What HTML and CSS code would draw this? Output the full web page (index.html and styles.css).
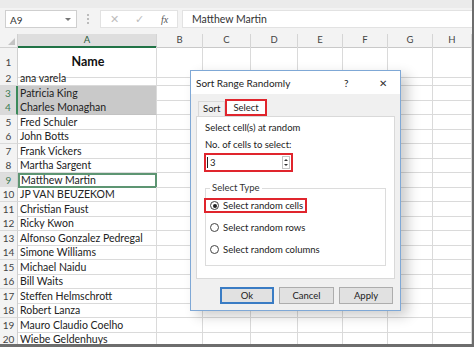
FILE: index.html
```html
<!DOCTYPE html>
<html lang="en">
<head>
  <meta charset="UTF-8">
  <title>Sort Range Randomly</title>
  <link rel="stylesheet" href="styles.css">
</head>
<body>
<div class="app">

  <!-- formula bar -->
  <div class="formula-bar">
    <div class="namebox">A9<span class="caret"></span></div>
    <div class="grip"></div>
    <div class="fx-box"><span class="fx-x">✕</span><span class="fx-ok">✓</span><span class="fx">fx</span></div>
    <div class="formula-input">Matthew Martin</div>
  </div>

  <!-- sheet -->
  <div class="sheet">
    <div class="row head">
      <div class="corner"><span></span></div>
      <div class="ch sel">A</div><div class="ch">B</div><div class="ch">C</div><div class="ch">D</div>
      <div class="ch">E</div><div class="ch">F</div><div class="ch">G</div><div class="ch">H</div>
    </div>
    <div class="row first">
      <div class="rh">1</div><div class="c a title">Name</div>
      <div class="c"></div><div class="c"></div><div class="c"></div><div class="c"></div><div class="c"></div><div class="c"></div><div class="c"></div>
    </div>
    <div class="row">
      <div class="rh">2</div><div class="c a">ana varela</div>
      <div class="c"></div><div class="c"></div><div class="c"></div><div class="c"></div><div class="c"></div><div class="c"></div><div class="c"></div>
    </div>
    <div class="row">
      <div class="rh sel">3</div><div class="c a picked">Patricia King</div>
      <div class="c"></div><div class="c"></div><div class="c"></div><div class="c"></div><div class="c"></div><div class="c"></div><div class="c"></div>
    </div>
    <div class="row">
      <div class="rh sel">4</div><div class="c a picked">Charles Monaghan</div>
      <div class="c"></div><div class="c"></div><div class="c"></div><div class="c"></div><div class="c"></div><div class="c"></div><div class="c"></div>
    </div>
    <div class="row">
      <div class="rh">5</div><div class="c a">Fred Schuler</div>
      <div class="c"></div><div class="c"></div><div class="c"></div><div class="c"></div><div class="c"></div><div class="c"></div><div class="c"></div>
    </div>
    <div class="row">
      <div class="rh">6</div><div class="c a">John Botts</div>
      <div class="c"></div><div class="c"></div><div class="c"></div><div class="c"></div><div class="c"></div><div class="c"></div><div class="c"></div>
    </div>
    <div class="row">
      <div class="rh">7</div><div class="c a">Frank Vickers</div>
      <div class="c"></div><div class="c"></div><div class="c"></div><div class="c"></div><div class="c"></div><div class="c"></div><div class="c"></div>
    </div>
    <div class="row">
      <div class="rh">8</div><div class="c a">Martha Sargent</div>
      <div class="c"></div><div class="c"></div><div class="c"></div><div class="c"></div><div class="c"></div><div class="c"></div><div class="c"></div>
    </div>
    <div class="row">
      <div class="rh active">9</div><div class="c a current">Matthew Martin</div>
      <div class="c"></div><div class="c"></div><div class="c"></div><div class="c"></div><div class="c"></div><div class="c"></div><div class="c"></div>
    </div>
    <div class="row">
      <div class="rh">10</div><div class="c a">JP VAN BEUZEKOM</div>
      <div class="c"></div><div class="c"></div><div class="c"></div><div class="c"></div><div class="c"></div><div class="c"></div><div class="c"></div>
    </div>
    <div class="row">
      <div class="rh">11</div><div class="c a">Christian Faust</div>
      <div class="c"></div><div class="c"></div><div class="c"></div><div class="c"></div><div class="c"></div><div class="c"></div><div class="c"></div>
    </div>
    <div class="row">
      <div class="rh">12</div><div class="c a">Ricky Kwon</div>
      <div class="c"></div><div class="c"></div><div class="c"></div><div class="c"></div><div class="c"></div><div class="c"></div><div class="c"></div>
    </div>
    <div class="row">
      <div class="rh">13</div><div class="c a">Alfonso Gonzalez Pedregal</div>
      <div class="c"></div><div class="c"></div><div class="c"></div><div class="c"></div><div class="c"></div><div class="c"></div><div class="c"></div>
    </div>
    <div class="row">
      <div class="rh">14</div><div class="c a">Simone Williams</div>
      <div class="c"></div><div class="c"></div><div class="c"></div><div class="c"></div><div class="c"></div><div class="c"></div><div class="c"></div>
    </div>
    <div class="row">
      <div class="rh">15</div><div class="c a">Michael Naidu</div>
      <div class="c"></div><div class="c"></div><div class="c"></div><div class="c"></div><div class="c"></div><div class="c"></div><div class="c"></div>
    </div>
    <div class="row">
      <div class="rh">16</div><div class="c a">Bill Waits</div>
      <div class="c"></div><div class="c"></div><div class="c"></div><div class="c"></div><div class="c"></div><div class="c"></div><div class="c"></div>
    </div>
    <div class="row">
      <div class="rh">17</div><div class="c a">Steffen Helmschrott</div>
      <div class="c"></div><div class="c"></div><div class="c"></div><div class="c"></div><div class="c"></div><div class="c"></div><div class="c"></div>
    </div>
    <div class="row">
      <div class="rh">18</div><div class="c a">Robert Lanza</div>
      <div class="c"></div><div class="c"></div><div class="c"></div><div class="c"></div><div class="c"></div><div class="c"></div><div class="c"></div>
    </div>
    <div class="row">
      <div class="rh">19</div><div class="c a">Mauro Claudio Coelho</div>
      <div class="c"></div><div class="c"></div><div class="c"></div><div class="c"></div><div class="c"></div><div class="c"></div><div class="c"></div>
    </div>
    <div class="row">
      <div class="rh">20</div><div class="c a">Wiebe Geldenhuys</div>
      <div class="c"></div><div class="c"></div><div class="c"></div><div class="c"></div><div class="c"></div><div class="c"></div><div class="c"></div>
    </div>
  </div>

  <!-- Sort Range Randomly dialog -->
  <div class="dialog">
    <div class="dlg-title">
      <span class="dlg-name">Sort Range Randomly</span>
      <span class="dlg-help">?</span>
      <span class="dlg-close">✕</span>
    </div>
    <div class="tabs">
      <div class="tab">Sort</div>
      <div class="tab active">Select</div>
    </div>
    <div class="panel">
      <p class="line first-line">Select cell(s) at random</p>
      <p class="line">No. of cells to select:</p>
      <div class="spin">
        <span class="spin-val">3</span>
        <span class="spin-btns"><i class="up"></i><i class="down"></i></span>
      </div>
      <fieldset class="group">
        <legend>Select Type</legend>
        <label class="radio mark"><span class="dot on"></span>Select random cells</label>
        <label class="radio"><span class="dot"></span>Select random rows</label>
        <label class="radio"><span class="dot"></span>Select random columns</label>
      </fieldset>
    </div>
    <div class="buttons">
      <button class="btn default">Ok</button>
      <button class="btn cancel">Cancel</button>
      <button class="btn">Apply</button>
    </div>
  </div>

</div>
</body>
</html>
```

FILE: styles.css
```css
* { box-sizing: border-box; }
body { margin: 0; background: #fff; font-family: Lato, "Liberation Sans", sans-serif; color: #222; }

.app {
  position: relative;
  width: 474px;
  height: 347px;
  overflow: hidden;
  border-right: 2px solid #6d6d6d;
  border-bottom: 3px solid #6d6d6d;
}

/* formula bar */
.formula-bar {
  display: flex;
  align-items: flex-start;
  height: 34px;
  padding: 10px 0 0 5px;
  background: linear-gradient(#ebebeb 0, #ebebeb 8px, #f3f3f3 8px);
}
.namebox {
  position: relative;
  width: 72px;
  height: 18px;
  padding: 3px 0 0 4px;
  background: #fff;
  border: 1px solid #cfcfcf;
  font-size: 10px;
  color: #333;
}
.caret {
  position: absolute;
  right: 5px;
  top: 7px;
  border-left: 3px solid transparent;
  border-right: 3px solid transparent;
  border-top: 3px solid #777;
}
.grip {
  width: 2px;
  height: 10px;
  margin: 4px 0 0 10px;
  border-left: 2px dotted #bcbcbc;
}
.fx-box {
  display: flex;
  align-items: center;
  width: 78px;
  height: 18px;
  margin-left: 11px;
  background: #fff;
  border: 1px solid #e2e2e2;
  font-size: 11px;
  color: #bdbdbd;
}
.fx-x { margin-left: 9px; }
.fx-ok { margin-left: 16px; }
.fx { margin-left: 17px; color: #555; font-family: "Liberation Serif", serif; font-style: italic; font-size: 10px; }
.formula-input {
  flex: 1;
  height: 18px;
  margin-left: 4px;
  padding: 2px 0 0 9px;
  background: #fff;
  border: 1px solid #e2e2e2;
  border-right: none;
  font-size: 10.5px;
  color: #333;
}

/* sheet */
.row {
  display: grid;
  grid-template-columns: 18px 139px 46px 48px 47px 45px 45px 45px 39px;
  height: 14.5px;
}
.row.head { height: 13px; }
.row.first { height: 24px; }

.corner {
  position: relative;
  background: #f3f3f3;
  border-right: 1px solid #d0d0d0;
  border-bottom: 1px solid #d0d0d0;
}
.corner span {
  position: absolute;
  right: 2px;
  bottom: 2px;
  border-left: 7px solid transparent;
  border-bottom: 7px solid #c3c3c3;
}
.ch {
  background: #f3f3f3;
  border-right: 1px solid #d5d5d5;
  border-bottom: 1px solid #c9c9c9;
  text-align: center;
  font-size: 9.5px;
  line-height: 12px;
  color: #444;
}
.ch.sel { background: #dedede; border-bottom: 2px solid #217346; color: #2a5a3a; }

.rh {
  background: #f3f3f3;
  border-right: 1px solid #cfcfcf;
  border-bottom: 1px solid #dadada;
  text-align: center;
  font-size: 10px;
  line-height: 14px;
  color: #444;
}
.row.first .rh { line-height: 30px; }
.rh.sel { background: #dadada; color: #3b7a55; border-right: 2px solid #3b8a5a; }
.rh.active { background: #dedede; color: #3b7a55; }

.c {
  border-right: 1px solid #dadada;
  border-bottom: 1px solid #dadada;
  font-size: 10.5px;
  line-height: 14px;
  white-space: nowrap;
}
.c.a { padding-left: 2px; }
.c.title {
  padding-top: 8px;
  text-align: center;
  font-weight: bold;
  font-size: 12.5px;
  color: #111;
}
.c.picked { background: #c9c9c9; border-bottom-color: #c2c2c2; }
.c.current { border: 2px solid #5d9572; line-height: 11px; padding-left: 1px; }

/* dialog */
.dialog {
  position: absolute;
  left: 190px;
  top: 70px;
  width: 211px;
  height: 241px;
  display: flex;
  flex-direction: column;
  background: #f0f0f0;
  border: 1px solid #7fa8d6;
  box-shadow: 7px 5px 12px rgba(0, 0, 0, 0.2);
  font-size: 9.5px;
  color: #222;
}
.dlg-title {
  display: flex;
  align-items: center;
  height: 23px;
  padding-left: 5px;
  background: #fff;
  font-size: 10px;
}
.dlg-name { flex: 1; }
.dlg-help { width: 10px; margin-right: 25px; font-size: 10px; }
.dlg-close { width: 10px; margin-right: 11px; font-size: 10px; color: #333; }

.tabs {
  display: flex;
  align-items: flex-end;
  height: 22px;
  padding-left: 7px;
}
.tab {
  height: 15px;
  padding: 0 4px;
  line-height: 14px;
  border: 1px solid #d9d9d9;
  border-bottom: none;
  background: #f0f0f0;
}
.tab.active {
  height: 17px;
  padding: 0 6px;
  line-height: 13px;
  background: #fff;
  border: 2px solid #e0252d;
}

.panel {
  height: 163px;
  margin: 0 5px;
  padding: 4px 0 0 8px;
  background: #fff;
  border: 1px solid #d9d9d9;
}
.line { margin: 0; line-height: 14px; }
.first-line { margin-bottom: 3px; }

.spin {
  display: flex;
  align-items: center;
  width: 89px;
  height: 19px;
  margin: 1px 0 0 -1px;
  border: 2px solid #e0252d;
  background: #fff;
}
.spin-val {
  flex: 1;
  padding-left: 2px;
  border-left: 1px solid #222;
  margin-left: 1px;
  line-height: 11px;
}
.spin-btns {
  display: flex;
  flex-direction: column;
  justify-content: space-around;
  align-items: center;
  width: 8px;
  height: 13px;
  margin-right: 1px;
  border: 1px solid #c4c4c4;
}
.spin-btns i { border-left: 2px solid transparent; border-right: 2px solid transparent; }
.spin-btns .up { border-bottom: 2px solid #333; }
.spin-btns .down { border-top: 2px solid #333; }

.group {
  width: 181px;
  margin: 10px 0 0 0;
  padding: 4px 0 8px 0;
  border: 1px solid #dcdcdc;
  display: flex;
  flex-direction: column;
  gap: 7px;
}
.group legend { margin-left: 4px; padding: 0 2px; line-height: 12px; color: #333; }

.radio {
  display: flex;
  align-items: center;
  gap: 4px;
  height: 15px;
  margin-left: -2px;
  padding-left: 4px;
  border: 2px solid transparent;
}
.radio.mark { width: 103px; border-color: #e0252d; }
.dot {
  position: relative;
  width: 9px;
  height: 9px;
  border: 1px solid #444;
  border-radius: 50%;
  background: #fff;
}
.dot.on::after {
  content: "";
  position: absolute;
  left: 1.5px;
  top: 1.5px;
  width: 4px;
  height: 4px;
  border-radius: 50%;
  background: #222;
}

.buttons {
  display: flex;
  justify-content: flex-end;
  gap: 5px;
  padding: 8px 7px 0 0;
}
.btn {
  width: 54px;
  height: 17px;
  padding: 0;
  background: #e1e1e1;
  border: 1px solid #adadad;
  font-family: inherit;
  font-size: 9.5px;
  color: #222;
}
.btn.cancel { width: 55px; }
.btn.default { border: 2px solid #3a7cc4; }
```
